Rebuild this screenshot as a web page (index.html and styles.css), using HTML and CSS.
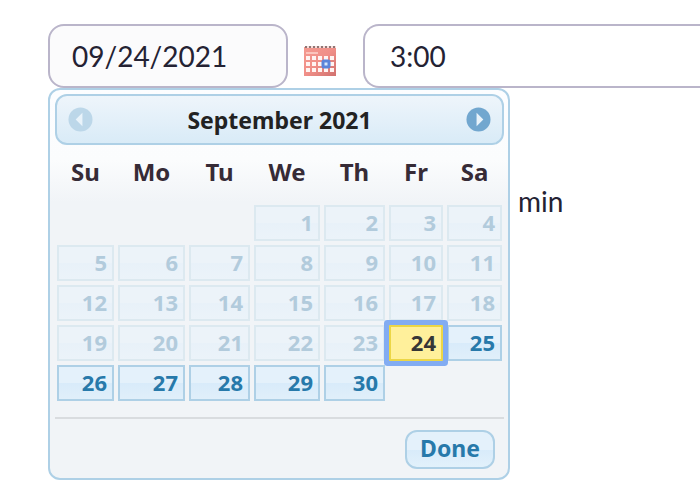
FILE: index.html
```html
<!DOCTYPE html>
<html lang="en">
<head>
<meta charset="utf-8">
<meta name="viewport" content="width=device-width, initial-scale=1">
<title>Schedule</title>
<link rel="stylesheet" href="styles.css">
</head>
<body>
<form class="schedule">
  <div class="fields">
    <div class="date-field">
      <input class="field" type="text" value="09/24/2021" aria-label="Date">
      <section class="picker" aria-label="Choose a date">
        <header class="picker-header">
          <button class="nav nav-off" type="button" aria-label="Previous month" disabled>
            <svg viewBox="0 0 26 26"><circle cx="13" cy="13" r="12.5" fill="currentColor"/><path d="M15 6v14L8 13z" fill="#e9f3fa"/></svg>
          </button>
          <h2 class="title">September 2021</h2>
          <button class="nav" type="button" aria-label="Next month">
            <svg viewBox="0 0 26 26"><circle cx="13" cy="13" r="12.5" fill="currentColor"/><path d="M11 6v14l7-7z" fill="#e9f3fa"/></svg>
          </button>
        </header>
        <table class="days">
          <colgroup><col class="c61"><col class="c71"><col class="c65"><col class="c70"><col class="c65"><col class="c58"><col class="c59"></colgroup>
          <thead>
            <tr><th>Su</th><th>Mo</th><th>Tu</th><th>We</th><th>Th</th><th>Fr</th><th>Sa</th></tr>
          </thead>
          <tbody>
            <tr><td></td><td></td><td></td><td><span class="day off">1</span></td><td><span class="day off">2</span></td><td><span class="day off">3</span></td><td><span class="day off">4</span></td></tr>
            <tr><td><span class="day off">5</span></td><td><span class="day off">6</span></td><td><span class="day off">7</span></td><td><span class="day off">8</span></td><td><span class="day off">9</span></td><td><span class="day off">10</span></td><td><span class="day off">11</span></td></tr>
            <tr><td><span class="day off">12</span></td><td><span class="day off">13</span></td><td><span class="day off">14</span></td><td><span class="day off">15</span></td><td><span class="day off">16</span></td><td><span class="day off">17</span></td><td><span class="day off">18</span></td></tr>
            <tr><td><span class="day off">19</span></td><td><span class="day off">20</span></td><td><span class="day off">21</span></td><td><span class="day off">22</span></td><td><span class="day off">23</span></td><td><a class="day today" href="#">24</a></td><td><a class="day" href="#">25</a></td></tr>
            <tr><td><a class="day" href="#">26</a></td><td><a class="day" href="#">27</a></td><td><a class="day" href="#">28</a></td><td><a class="day" href="#">29</a></td><td><a class="day" href="#">30</a></td><td></td><td></td></tr>
          </tbody>
        </table>
        <footer class="picker-footer"><button class="done" type="button">Done</button></footer>
      </section>
    </div>
    <button class="trigger" type="button" aria-label="Open calendar">
      <svg viewBox="0 0 32 30">
        <defs><linearGradient id="red" x1="0" y1="0" x2="1" y2="1"><stop offset="0" stop-color="#f49a90"/><stop offset=".5" stop-color="#f08f88"/><stop offset="1" stop-color="#d0716e"/></linearGradient></defs>
        <path d="M0 1h32v29H0z" fill="url(#red)"/>
        <path d="M1 1h31" stroke="#f8dcda" stroke-width="2"/>
        <path d="M1 1h31" stroke="#8d7674" stroke-width="2" stroke-dasharray="2 2"/>
        <path d="M2 7h12" stroke="#fbc4bc" stroke-width="2"/>
        <g stroke="#fff4f2" stroke-width="4" stroke-dasharray="4 2"><path d="M2 12h28"/><path d="M2 18h28"/><path d="M2 24h28"/></g>
        <rect x="19" y="15" width="6" height="6" rx="1" fill="#d5e6fb" stroke="#5b84da" stroke-width="3"/>
      </svg>
    </button>
    <input class="field time" type="text" value="3:00" aria-label="Time">
  </div>
  <p class="unit">min</p>
</form>
</body>
</html>
```
FILE: styles.css
```css
* { box-sizing: border-box; }

body {
  min-height: 100vh;
  margin: 0;
  background: #fff;
  color: #242233;
  font-family: Lato, sans-serif;
  font-size: 28px;
}

.schedule { padding: 24px 0 0 48px; }

.fields {
  display: flex;
  align-items: flex-start;
}

.date-field {
  position: relative;
  flex: 0 0 240px;
}

.field {
  display: block;
  width: 100%;
  height: 64px;
  margin: 0;
  padding: 0 22px;
  border: 2px solid #bab5ca;
  border-radius: 16px;
  background: #fbfbfc;
  color: inherit;
  font: inherit;
}

.time {
  flex: 1;
  min-width: 0;
  padding: 0 25px;
  border-right: 0;
  border-radius: 16px 0 0 16px;
  background: #fff;
}

.trigger {
  flex: none;
  width: 32px;
  margin: 22px 27px 0 16px;
  padding: 0;
  border: 0;
  background: none;
}

.trigger svg, .nav svg {
  display: block;
  width: 100%;
}

.unit {
  margin: 95px 0 0 470px;
  line-height: 36px;
}

.picker {
  position: absolute;
  top: 100%;
  left: 0;
  width: 462px;
  padding: 4px 4px 9px 5px;
  border: 2px solid #aed0e6;
  border-radius: 12px;
  background: linear-gradient(#fcfdff 0, #fbfcfd 70px, #f1f4f7 112px);
  font-family: "Noto Sans", sans-serif;
  font-weight: 700;
  font-size: 22px;
}

.picker-header {
  display: flex;
  align-items: center;
  justify-content: space-between;
  height: 51px;
  padding: 0 11px;
  border: 2px solid #aed0e6;
  border-radius: 12px;
  background: linear-gradient(#eef5fb, #d9ebf7);
}

.title {
  margin: 0;
  color: #222;
  font-size: 23px;
  line-height: 30px;
}

.nav {
  width: 25px;
  padding: 0;
  border: 0;
  background: none;
  color: #72a7cf;
}

.nav-off { color: #bcd7e9; }

.days {
  width: 100%;
  table-layout: fixed;
  border-collapse: collapse;
}

.c61 { width: 61px; }
.c71 { width: 71px; }
.c65 { width: 65px; }
.c70 { width: 70px; }
.c58 { width: 58px; }
.c59 { width: 59px; }

.days th {
  height: 58px;
  padding: 0 0 4px;
  color: #362b36;
  font-size: 24px;
  line-height: 32px;
}

.days td { padding: 2px; }

.day {
  display: block;
  height: 36px;
  padding: 0 5px;
  border: 2px solid #aed0e6;
  background: linear-gradient(#e4f1fb 50%, #d8ebfa 50%, #e0effa);
  color: #2779aa;
  line-height: 30px;
  text-align: right;
  text-decoration: none;
}

.off {
  border-color: #dce9f0;
  background: linear-gradient(#ecf3f9 50%, #e8f1f9 50%, #ebf3f9);
  color: #b2cbdc;
}

.today {
  position: relative;
  border-color: #ecd646;
  background: #fff09b;
  color: #363636;
  box-shadow: 0 0 0 5px #82acf2;
  border-radius: 1px;
}

.picker-footer {
  display: flex;
  justify-content: flex-end;
  margin-top: 14px;
  padding: 11px 9px 0;
  border-top: 2px solid #d9dcdf;
}

.done {
  height: 39px;
  padding: 0 13px 4px;
  border: 2px solid #aed0e6;
  border-radius: 12px;
  background: linear-gradient(#e4f1fb 50%, #d8ebfa 50%, #e2f1fb);
  color: #2779aa;
  font: inherit;
  font-size: 23px;
  line-height: 32px;
}
```
